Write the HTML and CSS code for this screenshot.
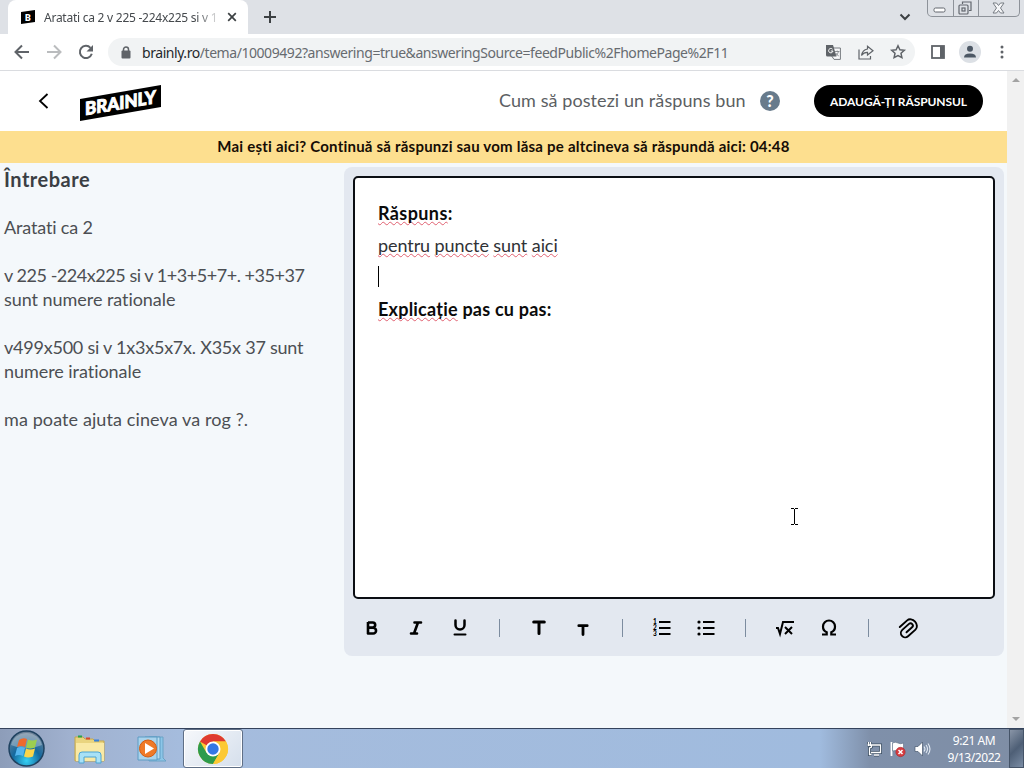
FILE: index.html
```html
<!DOCTYPE html>
<html lang="ro">
<head>
    <meta charset="UTF-8">
    <meta name="viewport" content="width=device-width, initial-scale=1.0">
    <title>Brainly</title>
    <link rel="stylesheet" href="styles.css">
</head>
<body>
    <!-- Browser tabs -->
    <div class="tabs">
        <div class="tab">
            <svg class="favicon" width="14" height="14" viewBox="0 0 14 14"><path d="M0 2L14 0V12L0 14Z" fill="#000"/><text x="4" y="10.500" font-size="9" font-weight="900" fill="#fff">B</text></svg>
            <span class="tab-title">Aratati ca 2 v 225 -224x225 si v 1</span>
            <svg width="10" height="10" viewBox="0 0 10 10" fill="none" stroke="#3c4043" stroke-width="1.700"><path d="M1.200 1.200l7.600 7.600M8.800 1.200L1.200 8.800"/></svg>
        </div>
        <svg class="plus" width="12" height="12" viewBox="0 0 12 12" fill="none" stroke="#3c4043" stroke-width="2"><path d="M6 0v12M0 6h12"/></svg>
        <svg class="tab-search" width="12" height="8" viewBox="0 0 12 8" fill="none" stroke="#3c4043" stroke-width="2"><path d="M1.500 1.500L6 6l4.500-4.500"/></svg>
        <div class="window-buttons">
            <span class="min"><svg width="13" height="6" viewBox="0 0 13 6"><rect x="1" y="1" width="11" height="4" rx="1.500" fill="#fff" stroke="#62676e"/></svg></span>
            <span class="max"><svg width="14" height="14" viewBox="0 0 14 14" fill="none" stroke="#62676e" stroke-width="1.200"><path d="M4.500 3V1h8.500v8.500h-2"/><rect x="1" y="4" width="9" height="9" rx="1"/><rect x="4" y="7" width="3" height="3"/></svg></span>
            <span class="close"><svg width="13" height="12" viewBox="0 0 13 12"><path d="M1 1h3.500l2 2.500L8.500 1H12L8.500 6 12 11H8.500l-2-2.500-2 2.500H1l3.500-5z" fill="#f5f6f8" stroke="#777c83"/></svg></span>
        </div>
    </div>

    <!-- Address bar -->
    <div class="toolbar">
        <svg class="nav" width="16" height="16" viewBox="0 0 16 16" fill="none" stroke="#5f6368" stroke-width="2"><path d="M15 8H2M8 1.500L1.500 8 8 14.500"/></svg>
        <svg class="nav" width="16" height="16" viewBox="0 0 16 16" fill="none" stroke="#babcbe" stroke-width="2"><path d="M1 8h13M8 1.500L14.500 8 8 14.500"/></svg>
        <svg class="nav" width="16" height="16" viewBox="0 0 16 16" fill="none" stroke="#5f6368" stroke-width="2"><path d="M13.800 9.800A6.100 6.100 0 1 1 12.500 3.800"/><path d="M15 1v6.500H8.500z" fill="#5f6368" stroke="none"/></svg>
        <div class="address">
            <svg class="lock" width="10" height="13" viewBox="0 0 10 13"><path d="M2.500 5V3.500a2.500 2.500 0 0 1 5 0V5" fill="none" stroke="#5f6368" stroke-width="1.500"/><rect x="0.500" y="4.500" width="9" height="8" rx="1" fill="#5f6368"/></svg>
            <span class="url"><b>brainly.ro</b>/tema/10009492?answering=true&amp;answeringSource=feedPublic%2FhomePage%2F11</span>
            <svg class="translate" width="15" height="15" viewBox="0 0 15 15"><path d="M5 3h9.400v11.400H8L5 10z" fill="#f8f9fa" stroke="#777b80"/><path d="M0 0h7l3.500 11.500H1.500Q0 11.500 0 10z" fill="#5f6368"/><path d="M6.500 4.200A2.200 2.200 0 1 0 7 6H4.800" fill="none" stroke="#fff"/><path d="M9 6.500h4.500M11.200 5.500v1M12.500 6.500q-.5 2.500-3 4.500M9.800 8q1 2 3 3" fill="none" stroke="#777b80" stroke-width=".8"/></svg>
            <svg class="share" width="16" height="15" viewBox="0 0 16 15" fill="none" stroke="#5f6368" stroke-width="1.200"><path d="M1 4.500v9.500h11.500v-3M9.500 4V1.200L15 5.800 9.500 10V7.400Q5.800 7.200 3.500 10.500 4.300 5 9.500 4z"/></svg>
            <svg width="16" height="16" viewBox="0 0 16 16" fill="none" stroke="#5f6368" stroke-width="1.500"><path d="M8 1.800l1.900 4 4.400.5-3.300 3 .9 4.300L8 11.500l-3.900 2.100.9-4.300-3.300-3 4.400-.5z"/></svg>
        </div>
        <svg class="side" width="14" height="14" viewBox="0 0 14 14"><rect x="1" y="1" width="12" height="12" fill="none" stroke="#5f6368" stroke-width="1.800"/><path d="M9 1h4v12H9z" fill="#5f6368"/></svg>
        <svg class="avatar" width="22" height="22" viewBox="0 0 22 22"><circle cx="11" cy="11" r="11" fill="#dce0e5"/><circle cx="11" cy="7.800" r="3" fill="#4d5865"/><path d="M5 16.500q0-4 6-4t6 4z" fill="#4d5865"/></svg>
        <svg class="dots" width="4" height="14" viewBox="0 0 4 14" fill="#5f6368"><circle cx="2" cy="2" r="1.500"/><circle cx="2" cy="7" r="1.500"/><circle cx="2" cy="12" r="1.500"/></svg>
    </div>

    <div class="viewport">
        <div class="page">
            <div class="header">
                <svg class="back" width="10" height="16" viewBox="0 0 10 16" fill="none" stroke="#000" stroke-width="1.800"><path d="M9.500 1L2 8l7.500 7"/></svg>
                <svg class="logo" width="82" height="37" viewBox="0 0 82 37"><path d="M0 14L81 0V22L0 36Z" fill="#000"/><text transform="translate(5 30.300) skewY(-9.700)" textLength="71" lengthAdjust="spacingAndGlyphs" font-size="18" font-weight="900" fill="#fff" stroke="#fff" stroke-width=".9">BRAINLY</text></svg>
                <a class="howto">Cum să postezi un răspuns bun</a>
                <span class="help">?</span>
                <button class="submit">ADAUGĂ-ȚI RĂSPUNSUL</button>
            </div>
            <div class="banner"><span>Mai ești aici? Continuă să răspunzi sau vom lăsa pe altcineva să răspundă aici: 04:48</span></div>
            <div class="content">
                <div class="question">
                    <h1>Întrebare</h1>
                    <p class="q1">Aratati ca 2</p>
                    <p><span class="q2">v 225 -224x225 si v 1+3+5+7+. +35+37</span><br><span class="q3">sunt numere rationale</span></p>
                    <p><span class="q4">v499x500 si v 1x3x5x7x. X35x 37 sunt</span><br><span class="q5">numere irationale</span></p>
                    <p class="q6">ma poate ajuta cineva va rog ?.</p>
                </div>
                <div class="editor">
                    <div class="answer">
                        <p class="title a1"><u>Răspuns</u>:</p>
                        <p class="a2"><u>pentru</u> <u>puncte</u> <u>sunt</u> <u>aici</u></p>
                        <p class="line"><span class="caret"></span></p>
                        <p class="title a3"><u>Explicație</u> pas cu pas:</p>
                        <svg class="cursor" width="9" height="17" viewBox="0 0 9 17" fill="none" stroke="#000"><path d="M1 .5h3M5 .5h3M4.500 1v15M1 16.500h3M5 16.500h3"/></svg>
                    </div>
                    <div class="tools">
                        <span class="tool"><svg width="12" height="14" viewBox="0 0 12 14" fill="none" stroke="#000" stroke-width="2.600"><path d="M2 1.500h4.700a2.500 2.500 0 0 1 0 5H2M2 6.800h5.200a2.800 2.800 0 0 1 0 5.700H2zM2 1v12" stroke-linejoin="round"/></svg></span>
                        <span class="tool"><svg width="14" height="14" viewBox="0 0 14 14" fill="none" stroke="#000" stroke-width="2.600" stroke-linecap="round"><path d="M5.500 1.500h6.500M2 12.500h6M9 1.500L5 12.500"/></svg></span>
                        <span class="tool"><svg width="14" height="17" viewBox="0 0 14 17" fill="none" stroke="#000" stroke-width="2.500" stroke-linecap="round"><path d="M2.500 1.500v4.500a4.500 4.500 0 0 0 9 0v-4.500"/><path d="M1.500 15.500h11" stroke-width="2"/></svg></span>
                        <span class="sep"></span>
                        <span class="tool"><svg width="14" height="15" viewBox="0 0 14 15" fill="none" stroke="#000" stroke-width="3" stroke-linecap="round"><path d="M1.700 2h10.600M7 2v11.500"/></svg></span>
                        <span class="tool"><svg class="small-t" width="12" height="12" viewBox="0 0 12 12" fill="none" stroke="#000" stroke-width="2.800" stroke-linecap="round"><path d="M1.800 1.700h8.400M6 1.700v8.800"/></svg></span>
                        <span class="sep"></span>
                        <span class="tool"><svg width="19" height="18" viewBox="0 0 19 18"><path d="M6 3h11.500M6 9h11.500M6 15h11.500" stroke="#000" stroke-width="2"/><g font-size="6.500" font-weight="900"><text x="0" y="5">1</text><text x="0" y="11">2</text><text x="0" y="17">3</text></g></svg></span>
                        <span class="tool"><svg width="19" height="16" viewBox="0 0 19 16"><path d="M6 2h11.500M6 8h11.500M6 14h11.500" stroke="#000" stroke-width="2"/><circle cx="2" cy="2" r="1.600"/><circle cx="2" cy="8" r="1.600"/><circle cx="2" cy="14" r="1.600"/></svg></span>
                        <span class="sep"></span>
                        <span class="tool"><svg width="18" height="16" viewBox="0 0 18 16" fill="none" stroke="#000" stroke-width="2"><path d="M0 8h2l2 6L7 2h11M9 7l7 7M16 7l-7 7"/></svg></span>
                        <span class="tool"><svg width="16" height="17" viewBox="0 0 16 17" fill="none" stroke="#000" stroke-width="2.200"><path d="M1 15.500h4.700v-2.300A6 6 0 0 1 2 7.500a6 6 0 0 1 12 0 6 6 0 0 1-3.700 5.700v2.300H15"/></svg></span>
                        <span class="sep"></span>
                        <!-- paperclip -->
                        <span class="tool"><svg width="22" height="20" viewBox="0 0 22 20" fill="none" stroke="#000" stroke-width="1.900" stroke-linecap="round"><g transform="rotate(-42 11 10)"><path d="M5.500 3.800H15.500a5 6.200 0 0 1 0 12.400H5.500a4.300 4.300 0 0 1 0-8.600H14.500a2.200 2.200 0 0 1 0 4.600H7" /></g></svg></span>
                    </div>
                </div>
            </div>
        </div>
        <div class="scrollbar"><i class="up"></i><i class="down"></i></div>
    </div>

    <!-- Windows taskbar -->
    <div class="taskbar">
        <svg class="start" width="37" height="37" viewBox="0 0 37 37">
            <defs><radialGradient id="orb" cx=".5" cy=".85" r=".8"><stop offset="0" stop-color="#35d0f4"/><stop offset=".5" stop-color="#14699f"/><stop offset="1" stop-color="#6b8197"/></radialGradient></defs>
            <circle cx="18.500" cy="18.500" r="17.500" fill="url(#orb)" stroke="#1f4260" stroke-width="1.500"/>
            <path d="M3 15A16 16 0 0 1 34 15Q18 22 3 15z" fill="#fff" opacity=".3"/>
            <path d="M11 10q4-3 8-1l-2 8q-4-2-8 0z" fill="#ee6a2c"/><path d="M20 9.500q4 2 9 0l-2 8q-5 2-9 0z" fill="#9cce50"/>
            <path d="M9 18q4-2 8 0l-2 8q-4-2-8 0z" fill="#55b5ee"/><path d="M18 18.500q4 2 9 0l-2 8q-5 2-9 0z" fill="#fbd54a"/>
        </svg>
        <svg class="explorer" width="34" height="30" viewBox="0 0 34 30">
            <path d="M2 2h8l2 2h8l2 2h9v20H2z" fill="#e9d47f" stroke="#c4a64c"/><path d="M3 8h28v18H3z" fill="#f9e9a5"/>
            <path d="M5 1.500h4" stroke="#2aa34a" stroke-width="2"/><path d="M13 3.500h4" stroke="#d9482b" stroke-width="2"/><path d="M21 5.500h5" stroke="#3b82d6" stroke-width="2"/>
            <path d="M6 28V20q0-3 3-3h16q3 0 3 3v8h-5v-6H11v6z" fill="#a8e1f7" stroke="#4ca4d3"/>
        </svg>
        <svg class="media" width="30" height="28" viewBox="0 0 30 28">
            <path d="M12 2h14v21l3 3H12z" fill="#8cc6e8" stroke="#6ba3c6"/><path d="M8 2h15v22H8z" fill="#b7dcf0" stroke="#5d9cc4"/><path d="M1 2h19v23H1z" fill="#a9d3ec" stroke="#5d9cc4"/>
            <circle cx="11" cy="13.500" r="8.500" fill="#ef7a28" stroke="#d35d13"/><path d="M8 8l9 5.500L8 19z" fill="#fff"/>
        </svg>
        <div class="active-app">
            <svg width="30" height="30" viewBox="0 0 30 30">
                <circle cx="15" cy="15" r="15" fill="#fcc934"/><path d="M15 15L2 7.500A15 15 0 0 1 28 7.500H15z" fill="#df3a30"/><path d="M2 7.500A15 15 0 0 0 15 30l6.500-11.200L15 15 8.500 18.800z" fill="#2d9b4c"/><path d="M15 7.500H28A15 15 0 0 1 15 30l6.500-11.200z" fill="#fcc934"/>
                <circle cx="15" cy="15" r="7.500" fill="#fff"/><circle cx="15" cy="15" r="5.700" fill="#3478e6"/>
            </svg>
        </div>
        <div class="tray">
            <svg width="16" height="16" viewBox="0 0 16 16" fill="none" stroke="#3c4f63" stroke-width="3"><path d="M6 4h8.500v7.500H5M8 14h5M2.500 1v4M4.500 1v4M1.500 4h4v2l-2 1v6.500h2"/><path d="M6 4h8.500v7.500H5M8 14h5M2.500 1v4M4.500 1v4M1.500 4h4v2l-2 1v6.500h2" stroke="#fff" stroke-width="1.300"/></svg>
            <svg width="16" height="16" viewBox="0 0 16 16"><path d="M1.500 1v14" stroke="#fff" stroke-width="1.800"/><path d="M2.500 2q3-1.500 5.500 0t5.500 0v8q-3 1-5.500 0t-5.500 0z" fill="#fff" stroke="#596b81" stroke-width=".6"/><circle cx="10.500" cy="11" r="4.700" fill="#d63c40" stroke="#a51e25" stroke-width=".5"/><path d="M8.500 9l4 4M12.500 9l-4 4" stroke="#fff" stroke-width="1.500"/></svg>
            <svg width="17" height="16" viewBox="0 0 17 16"><path d="M1 5.500h3L8.500 1v14L4 10.500H1z" fill="#fff" stroke="#46586d" stroke-width=".7"/><path d="M10 5.500q2 2.500 0 5M12 4q3 4 0 8M14 2.500q4 5.500 0 11" fill="none" stroke="#e2eaf3" stroke-width="1.100"/></svg>
            <div class="clock"><span>9:21 AM</span><span class="date">9/13/2022</span></div>
            <div class="show-desktop"></div>
        </div>
    </div>
</body>
</html>
```

FILE: styles.css
```css
* {
    box-sizing: border-box;
}
body {
    margin: 0;
    width: 1024px;
    height: 768px;
    overflow: hidden;
    display: flex;
    flex-direction: column;
    font-family: "Lato", sans-serif;
    font-variant-ligatures: none;
    background: #fff;
}
svg {
    display: block;
    flex: none;
    overflow: visible;
}
h1, p {
    margin: 0;
}

/* Browser */
.tabs {
    height: 34px;
    flex: none;
    display: flex;
    background: #dee1e6;
    padding-left: 8px;
    font-family: "Noto Sans", sans-serif;
}
.tab {
    width: 240px;
    display: flex;
    align-items: center;
    padding: 0 11px 0 13px;
    background: #fff;
    border-radius: 8px 8px 0 0;
}
.favicon {
    font-family: "Roboto", sans-serif;
}
.tab-title {
    width: 174px;
    margin: 0 9px;
    white-space: nowrap;
    font-size: 12px;
    letter-spacing: -0.25px;
    color: #45494d;
    mask-image: linear-gradient(to right, #000 152px, transparent 178px);
}
.plus {
    margin: 11px 0 0 16px;
}
.tab-search {
    margin: 13px 16px 0 auto;
}
.window-buttons {
    display: flex;
    width: 93px;
    height: 17px;
    margin-right: 4px;
    border: 1px solid #8d9299;
    border-top: 0;
    border-radius: 0 0 5px 5px;
}
.window-buttons span {
    display: flex;
    justify-content: center;
    align-items: center;
}
.window-buttons svg {
    margin-left: -2px;
}
.min {
    width: 25px;
    padding-top: 4px;
}
.max {
    width: 26px;
    border-left: 1px solid #8d9299;
    border-right: 1px solid #8d9299;
}
.close {
    flex: 1;
}
.toolbar {
    height: 37px;
    flex: none;
    display: flex;
    align-items: center;
    padding-left: 14px;
    border-bottom: 1px solid #dadce0;
}
.nav {
    margin-right: 16px;
}
.address {
    width: 807px;
    height: 28px;
    margin-left: -2px;
    padding: 0 9px 0 13px;
    display: flex;
    align-items: center;
    border-radius: 14px;
    background: #f1f3f4;
}
.url {
    flex: 1;
    margin-left: 11px;
    font: 14px "Noto Sans", sans-serif;
    letter-spacing: -0.44px;
    white-space: nowrap;
    color: #676b70;
}
.url b {
    font-weight: 400;
    color: #25282b;
}
.translate {
    margin-right: 17px;
}
.share {
    margin-right: 16px;
}
.side {
    margin-left: 16px;
}
.avatar {
    margin-left: 14px;
}
.dots {
    margin-left: 19px;
}

/* Page */
.viewport {
    height: 657px;
    flex: none;
    display: flex;
}
.page {
    width: 1007px;
    background: #f4f8fb;
}
.header {
    height: 60px;
    display: flex;
    align-items: center;
    background: #fff;
    padding-left: 38px;
}
.logo {
    margin: 5px 0 0 32px;
}
.howto {
    width: 247px;
    margin: -2px 0 0 337px;
    font-size: 18px;
    letter-spacing: 0.08px;
    white-space: nowrap;
    color: #5c5f63;
}
.help {
    width: 20px;
    height: 20px;
    margin-left: 14px;
    border-radius: 50%;
    background: #687b8c;
    color: #fff;
    font-size: 16px;
    font-weight: 900;
    line-height: 20px;
    text-align: center;
}
.submit {
    width: 169px;
    height: 32px;
    margin-left: 34px;
    padding: 0;
    border: 0;
    border-radius: 16px;
    background: #000;
    color: #fff;
    font: 700 12px "Lato", sans-serif;
    letter-spacing: -0.08px;
    white-space: nowrap;
}
.banner {
    height: 32px;
    background: #fddf8f;
    text-align: center;
    font-size: 15px;
    font-weight: 700;
    line-height: 31px;
    letter-spacing: 0.22px;
    color: #160d05;
}
.content {
    display: flex;
}
.question {
    width: 344px;
    padding: 4px 0 0 4px;
    font-size: 18px;
    line-height: 24px;
    white-space: nowrap;
    color: #4c4f53;
}
.question h1 {
    font-size: 20px;
    line-height: 24px;
    letter-spacing: 0.5px;
    color: #3b3f44;
}
.question p {
    margin-top: 24px;
}
.q1 {
    letter-spacing: -0.15px;
}
.q2 {
    letter-spacing: -0.46px;
}
.q3, .q5 {
    letter-spacing: -0.05px;
}
.q4 {
    letter-spacing: -0.23px;
}
.q6 {
    letter-spacing: 0.1px;
}
.editor {
    width: 660px;
    height: 489px;
    margin-top: 4px;
    padding: 9px 9px 0 9px;
    border-radius: 8px;
    background: #e3e8f0;
}
.answer {
    position: relative;
    height: 423px;
    padding: 19px 23px;
    border: 2px solid #0b0e13;
    border-radius: 5px;
    background: #fff;
    font-size: 18px;
    line-height: 32px;
    color: #303236;
}
.answer p {
    height: 32px;
}
.answer .title {
    font-weight: 700;
    color: #0b0b0b;
}
.answer .a1 {
    letter-spacing: 0.4px;
}
.answer .a2 {
    letter-spacing: -0.08px;
}
.answer .a3 {
    letter-spacing: 0.22px;
}
.answer u {
    text-decoration: underline wavy #e06070 1px;
    text-underline-offset: 1px;
    text-decoration-skip-ink: none;
}
.line {
    display: flex;
    align-items: center;
}
.caret {
    width: 1px;
    height: 21px;
    margin-top: -2px;
    background: #000;
}
.cursor {
    position: absolute;
    left: 435px;
    top: 330px;
}
.tools {
    height: 57px;
    margin-left: -3px;
    display: flex;
    align-items: center;
}
.tool {
    width: 44px;
    display: flex;
    justify-content: center;
}
.small-t {
    margin-top: 4px;
}
.sep {
    width: 1px;
    height: 18px;
    margin: 0 17px;
    background: #7c8c9f;
}
.scrollbar {
    width: 17px;
    display: flex;
    flex-direction: column;
    justify-content: space-between;
    align-items: center;
    padding: 7px 0;
    background: #f1f1f1;
}
.up, .down {
    border: 4px solid transparent;
}
.up {
    border-top: 0;
    border-bottom-color: #a3a3a3;
}
.down {
    border-bottom: 0;
    border-top-color: #a3a3a3;
}

/* Taskbar */
.taskbar {
    height: 40px;
    flex: none;
    display: flex;
    border-top: 1px solid #34435c;
    background: linear-gradient(to right, #8d9db9 0, #a0b1cf 70px, #a5bcdd 180px, #a0bbde 820px, #7f90aa 870px, #7f8ea5);
}
.start {
    margin: 1px 0 0 8px;
}
.explorer {
    margin: 6px 0 0 28px;
}
.media {
    margin: 6px 0 0 30px;
}
.active-app {
    width: 60px;
    height: 39px;
    margin-left: 16px;
    display: flex;
    align-items: center;
    justify-content: center;
    border: 1px solid #5f6f86;
    border-radius: 3px;
    box-shadow: inset 0 0 0 1px #fff;
    background: linear-gradient(135deg, #f6f8fb, #d5dfec);
}
.tray {
    display: flex;
    align-items: center;
    gap: 8px;
    margin-left: auto;
}
.clock {
    width: 70px;
    display: flex;
    flex-direction: column;
    align-items: center;
    font: 12px/17px "Noto Sans", sans-serif;
    letter-spacing: -0.45px;
    color: #fff;
}
.show-desktop {
    width: 15px;
    height: 39px;
    margin-left: -8px;
    border: 1px solid #455468;
    background: linear-gradient(135deg, #8995a7, #4e5f76 50%, #7b8da5);
}
```
